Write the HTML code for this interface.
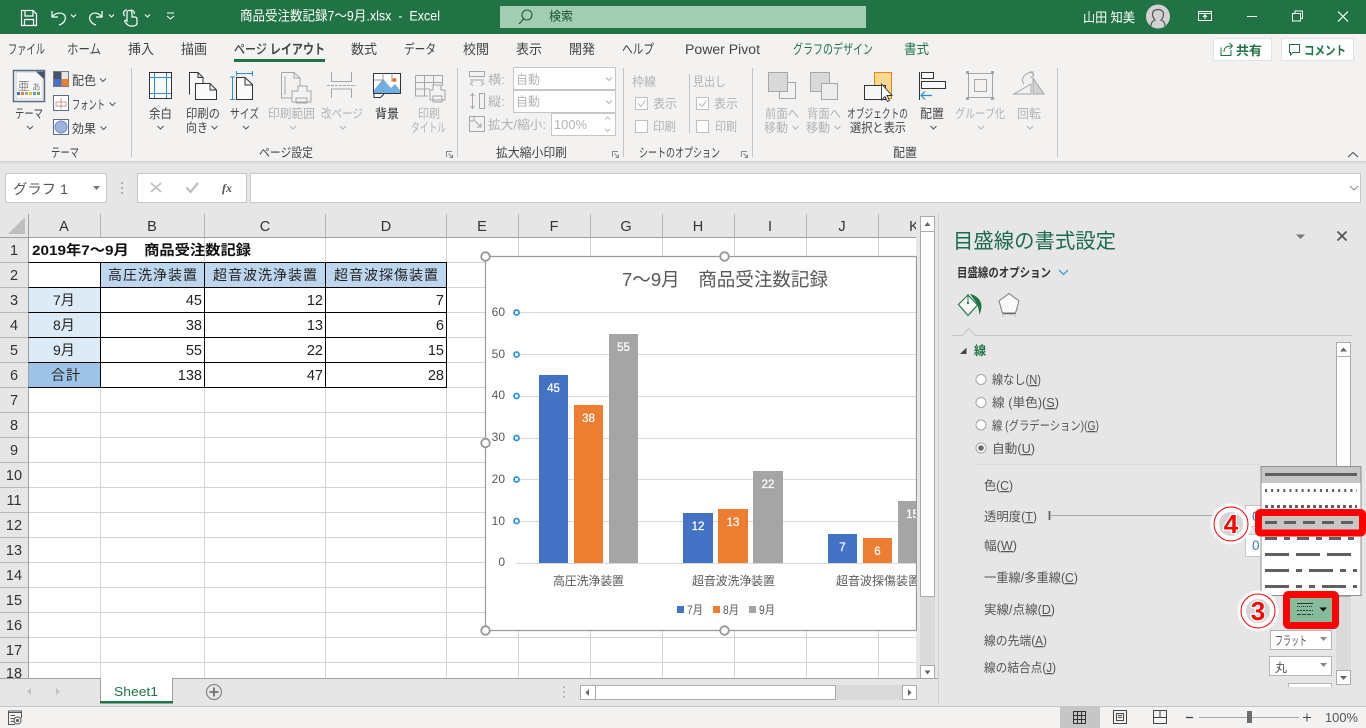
<!DOCTYPE html>
<html lang="ja"><head><meta charset="utf-8"><title>商品受注数記録7～9月.xlsx - Excel</title>
<style>
html,body{margin:0;padding:0;background:#e6e6e6;width:1366px;height:728px;overflow:hidden}
svg{display:block}
text{font-family:"Liberation Sans","Noto Sans CJK JP",sans-serif;font-size:12.5px;fill:#444}
.w{fill:#fff}.d{fill:#b3b3b3}.g{fill:#217346}.tab{font-size:13.5px}
.c{font-size:14px;fill:#222}.n{font-size:14.5px;fill:#222;text-anchor:end}
.h{font-size:14.5px;fill:#333;text-anchor:middle}
.p{font-size:12.5px;fill:#555}
.cl{font-size:11.5px;fill:#fff;text-anchor:middle;stroke:#fff;stroke-width:.25px}
.ax{font-size:12px;fill:#595959}
.u{text-decoration:underline}
.gl{stroke:#d4d4d4;stroke-width:1}
.blk{stroke:#000;stroke-width:1}
.ic{fill:none;stroke:#444;stroke-width:1}
.di{fill:none;stroke:#a6a6a6;stroke-width:1}
.dash{stroke:#5f5f5f;stroke-width:3}
</style></head><body>
<svg width="1366" height="728" viewBox="0 0 1366 728" xmlns="http://www.w3.org/2000/svg">
<defs>
<path id="ch" d="M-3 -1.5L0 1.5L3 -1.5" fill="none" stroke="#555" stroke-width="1"/>
<path id="chd" d="M-3 -1.5L0 1.5L3 -1.5" fill="none" stroke="#b3b3b3" stroke-width="1"/>
<path id="lau" d="M.5 6V.5H6M2.5 2.5L6.500 6.500M6.500 3.500V6.500H3.500" fill="none" stroke="#8a8a8a" stroke-width="1"/>
<clipPath id="cc"><rect x="480" y="250" width="436.500" height="390"/></clipPath>
<clipPath id="gc"><rect x="0" y="238" width="916" height="440"/></clipPath>
</defs>
<rect width="1366" height="728" fill="#e6e6e6"/>

<!-- title bar -->
<rect width="1366" height="34" fill="#217346"/>
<g fill="none" stroke="#fff" stroke-width="1.200">
<path d="M21.500 10.500H33L36.500 14V25.500H21.500ZM25 10.500V16H33V10.500M24.500 25.500V19.500H33.500V25.500"/>
<path d="M52 11V17H58M52.500 16.500C56 12 63 12 65 16C66.500 20 63 24 59 25"/>
<path d="M102 11V17H96M101.500 16.500C98 12 92 12 90 16C88.500 20 92 24 96 25"/>
<path d="M127 21V13C127 9.500 132 9.500 132 13V17H135C137 17 137 19 137 20V23C137 25 135 26 133 26H130C128 26 127 24 125 22C124 20 126 20 127 21ZM124.500 16C122 12 125 10 127 10M134 14C135 12 133 10 131 10"/>
</g>
<path d="M71 14.500L73.500 17L76 14.500M109 14.500L111.500 17L114 14.500M145 14.500L147.500 17L150 14.500" fill="none" stroke="#fff"/>
<path d="M167 13H174M167 16L170.500 19L174 16" fill="none" stroke="#fff"/>
<text class="w" x="240" y="20.500" textLength="200" lengthAdjust="spacingAndGlyphs" style="font-size:13.500px;white-space:pre">商品受注数記録7～9月.xlsx  -  Excel</text>
<rect x="500" y="6" width="366" height="22" fill="#a0cdb3"/>
<path d="M532 15a5 5 0 1 1-10 0a5 5 0 1 1 10 0M523.500 19L519 24" fill="none" stroke="#1d5c38" stroke-width="1.100"/>
<text x="549" y="20.500" textLength="24" lengthAdjust="spacingAndGlyphs" style="fill:#1c5535">検索</text>
<text class="w" x="1083" y="22" textLength="52" lengthAdjust="spacingAndGlyphs" style="font-size:13px">山田 知美</text>
<circle cx="1158" cy="16.500" r="12" fill="#d2d2d2"/>
<path d="M1151 26C1151 22 1153 21 1155 20C1153 18 1152.500 16 1152.500 14C1152.500 8 1163.500 8 1163.500 14C1163.500 16 1163 18 1161 20C1163 21 1165 22 1165 26" fill="none" stroke="#555" stroke-width="1.200"/>
<g fill="none" stroke="#fff" stroke-width="1">
<path d="M1198.500 11.500H1211.500V20.500H1198.500ZM1198.500 13.500H1211.500M1205 19V15M1203 17L1205 15L1207 17"/>
<path d="M1247 16.500H1257"/>
<path d="M1292.500 13.500H1300.500V21H1292.500ZM1295 13.500V11H1302.500V18.500H1300.500"/>
<path d="M1338 11.500L1348 21.500M1348 11.500L1338 21.500" stroke-width="1.200"/>
</g>

<!-- ribbon -->
<rect y="34" width="1366" height="127" fill="#f3f2f1"/>
<rect y="161" width="1366" height="1" fill="#d0d0d0"/><rect y="162" width="1366" height="1" fill="#dcdcdc"/><rect y="163" width="1366" height="1" fill="#e2e2e2"/>
<text class="tab" x="8" y="54" textLength="37" lengthAdjust="spacingAndGlyphs">ファイル</text>
<text class="tab" x="67" y="54" textLength="34" lengthAdjust="spacingAndGlyphs">ホーム</text>
<text class="tab" x="128" y="54" textLength="26" lengthAdjust="spacingAndGlyphs">挿入</text>
<text class="tab" x="181" y="54" textLength="26" lengthAdjust="spacingAndGlyphs">描画</text>
<text class="tab" x="234" y="54" textLength="91" lengthAdjust="spacingAndGlyphs" style="font-weight:500">ページ <tspan font-weight="bold">レイアウト</tspan></text>
<text class="tab" x="351" y="54" textLength="26" lengthAdjust="spacingAndGlyphs">数式</text>
<text class="tab" x="404" y="54" textLength="32" lengthAdjust="spacingAndGlyphs">データ</text>
<text class="tab" x="463" y="54" textLength="26" lengthAdjust="spacingAndGlyphs">校閲</text>
<text class="tab" x="516" y="54" textLength="26" lengthAdjust="spacingAndGlyphs">表示</text>
<text class="tab" x="569" y="54" textLength="26" lengthAdjust="spacingAndGlyphs">開発</text>
<text class="tab" x="622" y="54" textLength="32" lengthAdjust="spacingAndGlyphs">ヘルプ</text>
<text class="tab" x="685" y="54" textLength="75" lengthAdjust="spacingAndGlyphs">Power Pivot</text>
<text class="tab g" x="793" y="54" textLength="80" lengthAdjust="spacingAndGlyphs">グラフのデザイン</text>
<text class="tab g" x="904" y="54" textLength="25" lengthAdjust="spacingAndGlyphs">書式</text>
<rect x="234" y="59" width="91" height="3" fill="#217346"/>
<rect x="1213.500" y="38.500" width="58" height="22" fill="#fff" stroke="#e2e2e2"/>
<rect x="1281.500" y="38.500" width="72" height="22" fill="#fff" stroke="#e2e2e2"/>
<path d="M1221 47.500V55.500H1231V50M1224 52C1224 47 1227 46 1232 46M1229.500 43L1232.500 46L1229.500 49" fill="none" stroke="#217346"/>
<text class="g" x="1236" y="55" textLength="26" lengthAdjust="spacingAndGlyphs" font-weight="bold">共有</text>
<path d="M1289.500 44.500H1299.500V52.500H1293L1290.500 55V52.500H1289.500Z" fill="none" stroke="#217346"/>
<text class="g" x="1304" y="55" textLength="42" lengthAdjust="spacingAndGlyphs" font-weight="bold">コメント</text>

<!-- separators -->
<g stroke="#c4c4c4">
<path d="M131.500 68V157M457.500 68V157M623.500 68V157M752.500 68V157M1057.500 68V157"/>
<path d="M689.500 74V133"/>
</g>

<!-- theme group -->
<rect x="13.500" y="70.500" width="31" height="31" fill="#fff" stroke="#5b6b83" stroke-width="1.500"/>
<path d="M16 72H37L43 78V99H16Z" fill="#f7f7f7" stroke="#ccc"/>
<path d="M36 71.500H44V79Z" fill="#44546a"/>
<text x="18" y="90" style="font-size:11.500px;fill:#8a8a8a">亜</text><text x="32" y="90" style="font-size:8.500px;fill:#8a8a8a">あ</text>
<g><rect x="17" y="92" width="3" height="3" fill="#4472c4"/><rect x="21" y="92" width="3" height="3" fill="#ed7d31"/><rect x="25" y="92" width="3" height="3" fill="#a5a5a5"/><rect x="29" y="92" width="3" height="3" fill="#ffc000"/><rect x="33" y="92" width="3" height="3" fill="#5b9bd5"/><rect x="37" y="92" width="3" height="3" fill="#70ad47"/></g>
<text x="15" y="118" textLength="28" lengthAdjust="spacingAndGlyphs">テーマ</text>
<use href="#ch" x="30" y="127.500"/>
<rect x="53.500" y="71.500" width="15" height="15" fill="#e7e6e6" stroke="#7a7a7a"/>
<rect x="54" y="72" width="7.500" height="7" fill="#44546a"/><rect x="54" y="79" width="7.500" height="7" fill="#4472c4"/><rect x="61.500" y="79" width="7" height="7" fill="#ed7d31"/>
<text x="72" y="85" textLength="24" lengthAdjust="spacingAndGlyphs">配色</text><use href="#ch" x="103" y="80"/>
<rect x="53.500" y="95.500" width="15" height="15" fill="#fff" stroke="#5b6b83"/>
<path d="M56 102H66V106H56ZM61 98V109" fill="none" stroke="#c98" stroke-width="1"/>
<text x="72" y="109" textLength="33" lengthAdjust="spacingAndGlyphs">フォント</text><use href="#ch" x="112.500" y="104"/>
<rect x="53.500" y="119.500" width="15" height="15" fill="#fff" stroke="#5b6b83"/>
<circle cx="61" cy="127" r="6" fill="#9fb2de" stroke="#6f8ac8"/>
<text x="72" y="133" textLength="24" lengthAdjust="spacingAndGlyphs">効果</text><use href="#ch" x="103.500" y="128"/>
<text x="51" y="157" textLength="28" lengthAdjust="spacingAndGlyphs">テーマ</text>

<!-- page setup -->
<rect x="149.500" y="72.500" width="22" height="26" fill="#fafafa" stroke="#333"/>
<path d="M154.500 73V98M166.500 73V98M150 77.500H171M150 93.500H171" stroke="#2a8ad4" fill="none"/>
<text x="149" y="118" textLength="23" lengthAdjust="spacingAndGlyphs">余白</text><use href="#ch" x="160.500" y="127.500"/>
<path d="M189.500 94.500V72.500H198L203 77.500V83M198 72.500V77.500H203" fill="#fafafa" stroke="#333"/>
<path d="M195.500 83.500H210L216.500 90V99.500H195.500ZM210 83.500V90H216.500" fill="#fafafa" stroke="#333"/>
<text x="186" y="118" textLength="34" lengthAdjust="spacingAndGlyphs">印刷の</text>
<text x="186" y="132" textLength="22" lengthAdjust="spacingAndGlyphs">向き</text><use href="#ch" x="214.500" y="127.500"/>
<path d="M236.500 77.500H245L252.500 84.500V99.500H236.500ZM245 77.500V85H252.500" fill="#fafafa" stroke="#333"/>
<path d="M236 73.500H253M236.500 71V76M252.500 71V76M232.500 77V99.500M230 77H235M230 99.500H235" stroke="#2a8ad4" fill="none"/>
<text x="230" y="118" textLength="29" lengthAdjust="spacingAndGlyphs">サイズ</text><use href="#ch" x="246" y="127.500"/>
<path d="M281.500 72.500H294L300 78V88M281.500 72.500V98H292M285 76V95M294 72.500V78H300" class="di"/>
<path d="M298 86H307V91H311V102H292V91H298ZM296 98H307V103H296Z" fill="#f3f2f1" stroke="#a6a6a6"/>
<text class="d" x="268" y="118" textLength="47" lengthAdjust="spacingAndGlyphs">印刷範囲</text><use href="#chd" x="293" y="127.500"/>
<path d="M331.500 72V81.500H351.500V72M331.500 98V89H351.500V98" class="di"/><path d="M327 85.500H356" stroke="#a6a6a6" stroke-dasharray="3 1"/>
<text class="d" x="321" y="118" textLength="42" lengthAdjust="spacingAndGlyphs">改ページ</text><use href="#chd" x="343" y="127.500"/>
<rect x="373.500" y="73.500" width="27" height="20" fill="#fff" stroke="#333"/>
<path d="M374 90L383 79L391 88L395 84L400 90V93H374Z" fill="#6fb0e0"/>
<circle cx="394.500" cy="80" r="2" fill="#e8761e"/>
<path d="M383 73.500V85M392 73.500V82M374 80H383" stroke="#999"/>
<path d="M374 94V97.500H380.500L384 94" fill="#fff" stroke="#333"/>
<text x="375" y="118" textLength="24" lengthAdjust="spacingAndGlyphs" font-weight="500">背景</text>
<path d="M415.500 75.500H442.500V86M415.500 75.500V96H428M415.500 82.500H442.500M415.500 89H430M424.500 75.500V96M433.500 75.500V85" class="di"/>
<path d="M433 85H441V90H445V100H430V90H433ZM433 96H442V102H433Z" fill="#f3f2f1" stroke="#a6a6a6"/>
<text class="d" x="418" y="118" textLength="22" lengthAdjust="spacingAndGlyphs">印刷</text>
<text class="d" x="411" y="132" textLength="35" lengthAdjust="spacingAndGlyphs">タイトル</text>
<text x="259" y="157" textLength="54" lengthAdjust="spacingAndGlyphs">ページ設定</text>
<use href="#lau" x="446" y="151"/>

<!-- scale -->
<g class="di"><path d="M469.500 71.500H484.500V76.500H469.500ZM470 80H484"/><path d="M470 81.500L473 79.500M470 81.500L473 83.500M484 81.500L481 79.500M484 81.500L481 83.500" transform="translate(0,2)"/>
<path d="M479.500 93.500H484.500V108.500H479.500ZM472.500 94V108M470.500 96L472.500 93.500L474.500 96M470.500 106L472.500 108.500L474.500 106"/>
<path d="M469.500 116.500H484.500V131.500H469.500ZM469.500 121H474V116.500M475 121L481 127M481 123V127H477"/></g>
<text class="d" x="488" y="84" textLength="17" lengthAdjust="spacingAndGlyphs">横:</text>
<text class="d" x="488" y="106" textLength="17" lengthAdjust="spacingAndGlyphs">縦:</text>
<text class="d" x="488" y="129" textLength="58" lengthAdjust="spacingAndGlyphs">拡大/縮小:</text>
<rect x="513.500" y="67.500" width="102" height="22" fill="#fff" stroke="#c6c6c6"/>
<rect x="513.500" y="90.500" width="102" height="22" fill="#fff" stroke="#c6c6c6"/>
<rect x="551.500" y="113.500" width="64" height="22" fill="#fff" stroke="#c6c6c6"/>
<text class="d" x="516" y="84" textLength="24" lengthAdjust="spacingAndGlyphs">自動</text><use href="#chd" x="609" y="79"/>
<text class="d" x="516" y="106" textLength="24" lengthAdjust="spacingAndGlyphs">自動</text><use href="#chd" x="609" y="102"/>
<text class="d" x="554" y="129" textLength="33" lengthAdjust="spacingAndGlyphs">100%</text>
<path d="M605 119.500L607.500 117L610 119.500M605 129L607.500 131.500L610 129" fill="none" stroke="#bbb"/>
<text x="496" y="157" textLength="71" lengthAdjust="spacingAndGlyphs">拡大縮小印刷</text>
<use href="#lau" x="612" y="151"/>

<!-- sheet options -->
<text class="d" x="632" y="86" textLength="24" lengthAdjust="spacingAndGlyphs">枠線</text>
<text class="d" x="693" y="86" textLength="33" lengthAdjust="spacingAndGlyphs">見出し</text>
<g fill="#fdfdfd" stroke="#bfbfbf"><rect x="635.500" y="97.500" width="12" height="12"/><rect x="635.500" y="120.500" width="12" height="12"/><rect x="696.500" y="97.500" width="12" height="12"/><rect x="696.500" y="120.500" width="12" height="12"/></g>
<path d="M638 103.500L641 106.500L645.500 100.500M699 103.500L702 106.500L706.500 100.500" fill="none" stroke="#b5b5b5"/>
<text class="d" x="653" y="108" textLength="24" lengthAdjust="spacingAndGlyphs">表示</text>
<text class="d" x="653" y="131" textLength="23" lengthAdjust="spacingAndGlyphs">印刷</text>
<text class="d" x="714" y="108" textLength="24" lengthAdjust="spacingAndGlyphs">表示</text>
<text class="d" x="715" y="131" textLength="22" lengthAdjust="spacingAndGlyphs">印刷</text>
<text x="639" y="157" textLength="81" lengthAdjust="spacingAndGlyphs">シートのオプション</text>
<use href="#lau" x="741" y="151"/>

<!-- arrange -->
<rect x="779.500" y="82.500" width="16" height="16" fill="#f3f2f1" stroke="#a6a6a6"/>
<rect x="768.500" y="72.500" width="19" height="19" fill="#d9d9d9" stroke="#a6a6a6"/>
<rect x="810.500" y="72.500" width="19" height="19" fill="#d9d9d9" stroke="#a6a6a6"/>
<rect x="821.500" y="83.500" width="16" height="16" fill="#ececec" stroke="#a6a6a6"/>
<text class="d" x="765" y="118" textLength="34" lengthAdjust="spacingAndGlyphs">前面へ</text>
<text class="d" x="764" y="132" textLength="24" lengthAdjust="spacingAndGlyphs">移動</text><use href="#chd" x="795.500" y="127.500"/>
<text class="d" x="807" y="118" textLength="34" lengthAdjust="spacingAndGlyphs">背面へ</text>
<text class="d" x="806" y="132" textLength="24" lengthAdjust="spacingAndGlyphs">移動</text><use href="#chd" x="837.500" y="127.500"/>
<rect x="874.500" y="72.500" width="17" height="26" fill="#f9d98f" stroke="#e8861e"/>
<rect x="864.500" y="85.500" width="21" height="14" fill="#f7f7f7" stroke="#333"/>
<path d="M881.500 84V100L885 96.500L887.500 101.500L889.500 100.500L887 95.500H892Z" fill="#fff" stroke="#333" stroke-width=".9"/>
<text x="847" y="118" textLength="61" lengthAdjust="spacingAndGlyphs">オブジェクトの</text>
<text x="850" y="132" textLength="56" lengthAdjust="spacingAndGlyphs">選択と表示</text>
<text x="893" y="157" textLength="24" lengthAdjust="spacingAndGlyphs">配置</text>
<path d="M919.500 72V100" stroke="#333"/><rect x="921.500" y="72.500" width="12" height="6" fill="#fafafa" stroke="#333"/><rect x="921.500" y="81.500" width="24" height="7" fill="#fafafa" stroke="#333"/>
<path d="M921 95.500H932M925 91.500L921 95.500L925 99.500" fill="none" stroke="#2a8ad4" stroke-width="1.200"/>
<text x="920" y="118" textLength="24" lengthAdjust="spacingAndGlyphs">配置</text><use href="#ch" x="933.500" y="127.500"/>
<g class="di"><path d="M968.500 73.500H992.500V97.500H968.500ZM974.500 79.500H986.500V91.500H974.500Z"/></g>
<g fill="#a6a6a6"><rect x="966" y="71" width="3" height="3"/><rect x="991" y="71" width="3" height="3"/><rect x="966" y="97" width="3" height="3"/><rect x="991" y="97" width="3" height="3"/></g>
<text class="d" x="955" y="118" textLength="50" lengthAdjust="spacingAndGlyphs">グループ化</text><use href="#chd" x="981" y="127.500"/>
<path d="M1014 94L1031 84V94ZM1034 72C1024 72 1020 80 1024 84M1030 71L1034 75L1030 78" class="di" stroke-width="1"/>
<path d="M1033 78L1044 94H1033Z" fill="#d2d2d2" stroke="#a6a6a6"/>
<text class="d" x="1017" y="118" textLength="24" lengthAdjust="spacingAndGlyphs">回転</text><use href="#chd" x="1030" y="127.500"/>
<path d="M1348 157L1353 152.500L1358 157" fill="none" stroke="#444"/>

<!-- formula bar -->
<rect x="5.500" y="173.500" width="101" height="29" fill="#fff" stroke="#c6c6c6"/>
<text x="13" y="194" textLength="55" lengthAdjust="spacingAndGlyphs" style="font-size:14px;fill:#555">グラフ 1</text>
<path d="M93 186H100L96.500 190Z" fill="#777"/>
<g fill="#b0b0b0"><rect x="121" y="182" width="2" height="2"/><rect x="121" y="187" width="2" height="2"/><rect x="121" y="192" width="2" height="2"/></g>
<rect x="137.500" y="173.500" width="109" height="29" fill="#fff" stroke="#c6c6c6"/>
<path d="M151 183L161 192M161 183L151 192" stroke="#bdbdbd" stroke-width="1.600" fill="none"/>
<path d="M186.500 187.500L190.500 192L198 183" stroke="#bdbdbd" stroke-width="2.200" fill="none"/>
<text x="222" y="192" style="font-family:'Liberation Serif',serif;font-style:italic;font-weight:bold;font-size:12px;fill:#555">fx</text>
<rect x="250.500" y="173.500" width="1110" height="29" fill="#fff" stroke="#c6c6c6"/>
<path d="M1350 186L1354 190L1358 186" fill="none" stroke="#888"/>

<!-- sheet -->
<rect x="0" y="214" width="938" height="24" fill="#e6e6e6"/>
<rect x="0" y="238" width="29" height="440" fill="#e6e6e6"/>
<rect x="29" y="238" width="887" height="440" fill="#fff"/>
<path d="M8 234L25 217V234Z" fill="#bfbfbf"/>
<g stroke="#b5b5b5"><path d="M28.500 214V237M100.500 214V237M204.500 214V237M325.500 214V237M446.500 214V237M518.500 214V237M590.500 214V237M662.500 214V237M734.500 214V237M806.500 214V237M878.500 214V237"/></g>
<path d="M0 237.500H916M28.500 214V678" stroke="#9f9f9f"/>
<g clip-path="url(#gc)">
<g class="gl">
<path d="M100.500 238V678M204.500 238V678M325.500 238V678M446.500 238V678M518.500 238V678M590.500 238V678M662.500 238V678M734.500 238V678M806.500 238V678M878.500 238V678"/>
<path d="M29 262.500H916M29 287.500H916M29 312.500H916M29 337.500H916M29 362.500H916M29 387.500H916M29 412.500H916M29 437.500H916M29 462.500H916M29 487.500H916M29 512.500H916M29 537.500H916M29 562.500H916M29 587.500H916M29 612.500H916M29 637.500H916M29 662.500H916"/>
</g>
<g stroke="#b9b9b9"><path d="M0 262.500H28M0 287.500H28M0 312.500H28M0 337.500H28M0 362.500H28M0 387.500H28M0 412.500H28M0 437.500H28M0 462.500H28M0 487.500H28M0 512.500H28M0 537.500H28M0 562.500H28M0 587.500H28M0 612.500H28M0 637.500H28M0 662.500H28"/></g>
</g>
<rect x="29" y="238" width="175" height="24" fill="#fff"/><rect x="204" y="238" width="121" height="24" fill="#fff"/>
<path d="M204.500 238V262M325.500 238V262M446.500 238V262" class="gl"/>
<rect x="100" y="262" width="346" height="25" fill="#bdd7ee"/>
<rect x="29" y="287" width="71" height="75" fill="#ddebf7"/>
<rect x="29" y="362" width="71" height="25" fill="#9dc3e6"/>
<g class="blk"><path d="M28.500 262.500H447M28.500 287.500H447M28.500 312.500H447M28.500 337.500H447M28.500 362.500H447M28.500 387.500H447M100.500 262V388M204.500 262V388M325.500 262V388M446.500 262V388"/></g>

<text class="h" x="64" y="231">A</text><text class="h" x="152" y="231">B</text><text class="h" x="265" y="231">C</text><text class="h" x="386" y="231">D</text><text class="h" x="482" y="231">E</text><text class="h" x="554" y="231">F</text><text class="h" x="626" y="231">G</text><text class="h" x="698" y="231">H</text><text class="h" x="770" y="231">I</text><text class="h" x="842" y="231">J</text><text class="h" x="914" y="231">K</text>
<rect x="916" y="214" width="22" height="24" fill="#e6e6e6"/>
<text class="h" x="14" y="255">1</text><text class="h" x="14" y="280">2</text><text class="h" x="14" y="305">3</text><text class="h" x="14" y="330">4</text><text class="h" x="14" y="355">5</text><text class="h" x="14" y="380">6</text><text class="h" x="14" y="405">7</text><text class="h" x="14" y="430">8</text><text class="h" x="14" y="455">9</text><text class="h" x="14" y="480">10</text><text class="h" x="14" y="505">11</text><text class="h" x="14" y="530">12</text><text class="h" x="14" y="555">13</text><text class="h" x="14" y="580">14</text><text class="h" x="14" y="605">15</text><text class="h" x="14" y="630">16</text><text class="h" x="14" y="655">17</text>
<text class="h" x="14" y="678">18</text>

<text class="c" x="32" y="255" textLength="219" lengthAdjust="spacingAndGlyphs" font-weight="bold" style="fill:#111">2019年7～9月　商品受注数記録</text>
<text class="c" x="108" y="280" textLength="89" lengthAdjust="spacing">高圧洗浄装置</text>
<text class="c" x="213" y="280" textLength="104" lengthAdjust="spacing">超音波洗浄装置</text>
<text class="c" x="334" y="280" textLength="104" lengthAdjust="spacing">超音波探傷装置</text>
<text class="c" x="53" y="305">7月</text><text class="c" x="53" y="330">8月</text><text class="c" x="53" y="355">9月</text>
<text class="c" x="51" y="380" textLength="29" lengthAdjust="spacing">合計</text>
<text class="n" x="202" y="305">45</text><text class="n" x="323" y="305">12</text><text class="n" x="444" y="305">7</text>
<text class="n" x="202" y="330">38</text><text class="n" x="323" y="330">13</text><text class="n" x="444" y="330">6</text>
<text class="n" x="202" y="355">55</text><text class="n" x="323" y="355">22</text><text class="n" x="444" y="355">15</text>
<text class="n" x="202" y="380">138</text><text class="n" x="323" y="380">47</text><text class="n" x="444" y="380">28</text>

<!-- chart -->
<rect x="486" y="257" width="431" height="373" fill="#fff"/>
<g clip-path="url(#cc)">
<path d="M516 312.500H917M516 354.500H917M516 396.500H917M516 438.500H917M516 479.500H917M516 521.500H917M516 563.500H917" stroke="#d9d9d9"/>
<rect x="539" y="375" width="29" height="188" fill="#4472c4"/>
<rect x="574" y="405" width="29" height="158" fill="#ed7d31"/>
<rect x="609" y="334" width="29" height="229" fill="#a5a5a5"/>
<rect x="683" y="513" width="30" height="50" fill="#4472c4"/>
<rect x="718" y="509" width="30" height="54" fill="#ed7d31"/>
<rect x="753" y="471" width="30" height="92" fill="#a5a5a5"/>
<rect x="828" y="534" width="29" height="29" fill="#4472c4"/>
<rect x="863" y="538" width="29" height="25" fill="#ed7d31"/>
<rect x="898" y="501" width="29" height="62" fill="#a5a5a5"/>
<text class="cl" x="553.500" y="392">45</text><text class="cl" x="588.500" y="422">38</text><text class="cl" x="623.500" y="351">55</text>
<text class="cl" x="698" y="530">12</text><text class="cl" x="733" y="526">13</text><text class="cl" x="768" y="488">22</text>
<text class="cl" x="842.500" y="551">7</text><text class="cl" x="877.500" y="555">6</text><text class="cl" x="912.500" y="518">15</text>
<text class="ax" x="553" y="585" textLength="71" lengthAdjust="spacing">高圧洗浄装置</text>
<text class="ax" x="692" y="585" textLength="83" lengthAdjust="spacing">超音波洗浄装置</text>
<text class="ax" x="836" y="585" textLength="84" lengthAdjust="spacing">超音波探傷装置</text>
</g>
<text x="622" y="286" textLength="206" lengthAdjust="spacingAndGlyphs" style="font-size:18.500px;fill:#595959">7～9月　商品受注数記録</text>
<text class="ax" x="505" y="316" text-anchor="end">60</text><text class="ax" x="505" y="358" text-anchor="end">50</text><text class="ax" x="505" y="399" text-anchor="end">40</text><text class="ax" x="505" y="441" text-anchor="end">30</text><text class="ax" x="505" y="483" text-anchor="end">20</text><text class="ax" x="505" y="525" text-anchor="end">10</text><text class="ax" x="505" y="566" text-anchor="end">0</text>
<g fill="#fff" stroke="#2f93e0" stroke-width="1.800"><circle cx="516.500" cy="312.500" r="2.500"/><circle cx="516.500" cy="354.500" r="2.500"/><circle cx="516.500" cy="396" r="2.500"/><circle cx="516.500" cy="438" r="2.500"/><circle cx="516.500" cy="479.500" r="2.500"/><circle cx="516.500" cy="521" r="2.500"/></g>
<rect x="677" y="606" width="7" height="7" fill="#4472c4"/><text class="ax" x="687" y="614" textLength="16" lengthAdjust="spacingAndGlyphs" style="font-size:12px">7月</text>
<rect x="713" y="606" width="7" height="7" fill="#ed7d31"/><text class="ax" x="723" y="614" textLength="16" lengthAdjust="spacingAndGlyphs" style="font-size:12px">8月</text>
<rect x="749" y="606" width="7" height="7" fill="#a5a5a5"/><text class="ax" x="759" y="614" textLength="16" lengthAdjust="spacingAndGlyphs" style="font-size:12px">9月</text>
<path d="M916.500 256.500H485.500V630.500H916.500V256.500" fill="none" stroke="#9a9a9a" stroke-width="1.200"/>
<g fill="#fff" stroke="#979797" stroke-width="1.800"><circle cx="485.500" cy="256.500" r="4.300"/><circle cx="724.500" cy="256.500" r="4.300"/><circle cx="485.500" cy="443" r="4.300"/><circle cx="485.500" cy="630.500" r="4.300"/><circle cx="724.500" cy="630.500" r="4.300"/></g>

<!-- vertical scrollbar -->
<rect x="917" y="214" width="21" height="464" fill="#e6e6e6"/>
<rect x="920" y="232" width="15" height="433" fill="#dadada"/>
<rect x="920.500" y="216.500" width="14" height="15" fill="#fff" stroke="#ababab"/>
<rect x="920.500" y="231.500" width="14" height="365" fill="#fff" stroke="#ababab"/>
<rect x="920.500" y="665.500" width="14" height="14" fill="#fff" stroke="#ababab"/>
<path d="M924.500 226L927.500 222L930.500 226ZM924.500 670.500H930.500L927.500 674.500Z" fill="#666"/>

<!-- tabs bar -->
<rect x="0" y="678" width="938" height="28" fill="#e6e6e6"/>
<path d="M0 678.500H100M172 678.500H938" stroke="#9f9f9f"/>
<rect x="100" y="678" width="73" height="25" fill="#fff"/>
<path d="M100.500 678V703M172.500 678V703" stroke="#9f9f9f"/>
<rect x="100" y="701" width="73" height="2.500" fill="#217346"/>
<text x="114" y="696" textLength="44" lengthAdjust="spacingAndGlyphs" style="font-size:13px;fill:#217346">Sheet1</text>
<path d="M31 688V695L27 691.500ZM56 688V695L60 691.500Z" fill="#c4c4c4"/>
<circle cx="214" cy="692" r="7.500" fill="none" stroke="#8a8a8a" stroke-width="1.300"/>
<path d="M209.500 692H218.500M214 687.500V696.500" stroke="#6f6f6f" stroke-width="1.800"/>
<g fill="#bdbdbd"><rect x="563" y="686" width="2" height="2"/><rect x="563" y="691" width="2" height="2"/><rect x="563" y="696" width="2" height="2"/></g>
<rect x="580" y="685" width="337" height="15" fill="#dadada"/>
<rect x="580.500" y="685.500" width="15" height="14" fill="#fff" stroke="#ababab"/>
<rect x="595.500" y="685.500" width="240" height="14" fill="#fff" stroke="#ababab"/>
<rect x="902.500" y="685.500" width="14" height="14" fill="#fff" stroke="#ababab"/>
<path d="M589 689V696L585.500 692.500ZM908 689V696L911.500 692.500Z" fill="#666"/>
<path d="M938.500 214V704" stroke="#d0d0d0"/>

<!-- pane -->
<rect x="939" y="214" width="427" height="492" fill="#e6e6e6"/>
<text x="953" y="248" textLength="163" lengthAdjust="spacingAndGlyphs" style="font-size:20.500px;fill:#1b6a50">目盛線の書式設定</text>
<path d="M1296 234.500H1305L1300.500 239Z" fill="#777"/>
<path d="M1337.500 231.500L1346.500 240.500M1346.500 231.500L1337.500 240.500" stroke="#555" stroke-width="1.800"/>
<text x="957" y="277" textLength="94" lengthAdjust="spacingAndGlyphs" font-weight="bold" style="fill:#333">目盛線のオプション</text>
<path d="M1059 270L1063.500 274.500L1068 270" fill="none" stroke="#2a8ad4" stroke-width="1.100"/>
<path d="M958.500 304.500L968 295L977.500 305L968 315.500Z" fill="#fafafa" stroke="#217346" stroke-width="1.100"/>
<path d="M968 294V302" stroke="#217346"/><circle cx="968" cy="303" r="1.100" fill="#217346"/>
<path d="M970 294C976 295 981.500 300 981.500 306C981.500 309 980.500 312 979.500 315C979 311 978.500 307 976.500 303Z" fill="#217346"/>
<path d="M1009 293.500L1019 301L1015.500 313H1002.500L999 301Z" fill="#fafafa" stroke="#7a7a7a"/>
<path d="M1002.500 313.500H1015.500" stroke="#6a6a6a" stroke-width="1.500"/>
<path d="M1002.500 315V317M1015.500 315V317" stroke="#c4c4c4"/>
<path d="M952 335.500H962.500L969 328.500L975.500 335.500H1352" fill="none" stroke="#c6c6c6"/>
<path d="M960 354H966.500V347.500Z" fill="#444"/>
<text class="g" x="974" y="355" textLength="12" lengthAdjust="spacingAndGlyphs" font-weight="bold">線</text>
<g fill="#fff" stroke="#a6a6a6"><circle cx="981" cy="379.500" r="5"/><circle cx="981" cy="402.500" r="5"/><circle cx="981" cy="425" r="5"/><circle cx="981" cy="448" r="5"/></g>
<circle cx="981" cy="448" r="2.800" fill="#666"/>
<text class="p" x="992" y="384" textLength="49" lengthAdjust="spacingAndGlyphs">線なし(<tspan class="u">N</tspan>)</text>
<text class="p" x="992" y="407" textLength="67" lengthAdjust="spacingAndGlyphs">線 (単色)(<tspan class="u">S</tspan>)</text>
<text class="p" x="992" y="430" textLength="107" lengthAdjust="spacingAndGlyphs">線 (グラデーション)(<tspan class="u">G</tspan>)</text>
<text class="p" x="992" y="453" textLength="43" lengthAdjust="spacingAndGlyphs">自動(<tspan class="u">U</tspan>)</text>
<path d="M974 464.500H1262" stroke="#dcdcdc"/>
<rect x="1336" y="357" width="15" height="314" fill="#dadada"/>
<rect x="1336.500" y="342.500" width="14" height="14" fill="#fff" stroke="#ababab"/>
<rect x="1336.500" y="356.500" width="14" height="240" fill="#fff" stroke="#ababab"/>
<rect x="1336.500" y="670.500" width="14" height="14" fill="#fff" stroke="#ababab"/>
<path d="M1340 351.500L1343.500 347.500L1347 351.500ZM1340 676H1347L1343.500 680Z" fill="#666"/>

<text class="p" x="984" y="490" textLength="29" lengthAdjust="spacingAndGlyphs">色(<tspan class="u">C</tspan>)</text>
<text class="p" x="984" y="521" textLength="53" lengthAdjust="spacingAndGlyphs">透明度(<tspan class="u">T</tspan>)</text>
<path d="M1049.500 511V520" stroke="#666" stroke-width="1.800"/><path d="M1050 515.500H1246" stroke="#a8a8a8"/>
<rect x="1245.500" y="505.500" width="20" height="21" fill="#fff" stroke="#c6c6c6"/>
<text x="1252" y="521" style="fill:#3b79b8;font-size:13.500px">0</text>
<text class="p" x="984" y="550" textLength="33" lengthAdjust="spacingAndGlyphs">幅(<tspan class="u">W</tspan>)</text>
<rect x="1245.500" y="534.500" width="20" height="22" fill="#fff" stroke="#c6c6c6"/>
<text x="1252" y="550" style="fill:#3b79b8;font-size:13.500px">0</text>
<text class="p" x="984" y="582" textLength="94" lengthAdjust="spacingAndGlyphs">一重線/多重線(<tspan class="u">C</tspan>)</text>
<text class="p" x="984" y="614" textLength="71" lengthAdjust="spacingAndGlyphs">実線/点線(<tspan class="u">D</tspan>)</text>
<text class="p" x="984" y="645" textLength="63" lengthAdjust="spacingAndGlyphs">線の先端(<tspan class="u">A</tspan>)</text>
<text class="p" x="984" y="672" textLength="72" lengthAdjust="spacingAndGlyphs">線の結合点(<tspan class="u">J</tspan>)</text>
<rect x="1270.500" y="630.500" width="61" height="19" fill="#fff" stroke="#b5b5b5"/>
<text class="p" x="1275" y="645" textLength="32" lengthAdjust="spacingAndGlyphs">フラット</text>
<path d="M1320 637H1327L1323.500 641Z" fill="#888"/>
<rect x="1269.500" y="656.500" width="62" height="19" fill="#fff" stroke="#b5b5b5"/>
<text class="p" x="1275" y="672" textLength="12" lengthAdjust="spacingAndGlyphs">丸</text>
<path d="M1320 663H1327L1323.500 667Z" fill="#888"/>
<rect x="1288" y="683" width="44" height="4" fill="#fff"/>
<path d="M1288.500 687V683.500H1331.500V687" fill="none" stroke="#b5b5b5"/>

<!-- dropdown -->
<rect x="1261" y="466.500" width="100" height="129" fill="#fff" stroke="#8f8f8f"/>
<rect x="1261.500" y="467" width="99" height="16" fill="#c6c6c6"/>
<path d="M1265 474.500H1357" class="dash"/>
<path d="M1265 490.500H1357" class="dash" stroke-dasharray="2 4.100"/>
<path d="M1265 506.500H1357" class="dash" stroke-dasharray="3 3"/>
<rect x="1262" y="516" width="97" height="14" fill="#c6c6c6"/>
<path d="M1265 522.500H1357" class="dash" stroke-dasharray="12 7"/>
<path d="M1265 538.500H1357" class="dash" stroke-dasharray="12 7 6 7"/>
<path d="M1265 554.500H1357" class="dash" stroke-dasharray="24 7"/>
<path d="M1265 570.500H1357" class="dash" stroke-dasharray="24 7 6 7"/>
<path d="M1265 586.500H1357" class="dash" stroke-dasharray="24 7 6 7 6 7"/>

<rect x="1258.500" y="512.500" width="104" height="20.500" fill="none" stroke="#f00" stroke-width="7" rx="2"/>
<rect x="1286.500" y="594.500" width="49" height="31" fill="#86bc9c" stroke="#f00" stroke-width="7" rx="2"/>
<path d="M1297 603.500H1313" stroke="#333"/><path d="M1297 606.500H1313" stroke="#333" stroke-dasharray="1 1"/><path d="M1297 610.500H1313" stroke="#333" stroke-dasharray="2 1"/><path d="M1297 614.500H1313" stroke="#333" stroke-dasharray="4 1"/>
<path d="M1319.500 607.500H1327L1323.200 611.500Z" fill="#000"/>

<!-- callouts -->
<circle cx="1231" cy="524" r="20.500" fill="#fff"/><circle cx="1231" cy="524" r="17" fill="#fff" stroke="#f00" stroke-width="1"/>
<circle cx="1231" cy="524" r="12" fill="#d4d4d4"/>
<text x="1231" y="533" text-anchor="middle" style="font-size:26px;font-weight:bold;fill:#f00;stroke:#fff;stroke-width:2.500px;paint-order:stroke">4</text>
<circle cx="1258" cy="611" r="20.500" fill="#fff"/><circle cx="1258" cy="611" r="17" fill="#fff" stroke="#f00" stroke-width="1"/>
<circle cx="1258" cy="611" r="12" fill="#d4d4d4"/>
<text x="1258" y="620" text-anchor="middle" style="font-size:26px;font-weight:bold;fill:#f00;stroke:#fff;stroke-width:2.500px;paint-order:stroke">3</text>

<!-- status bar -->
<rect y="706" width="1366" height="22" fill="#f3f2f1"/>
<path d="M0 706.500H1366" stroke="#c6c6c6"/>
<path d="M8.500 712.500V711H21.500V718M8.500 712.500H21.500M8.500 712.500V724.500H15M10.500 715.500H15M10.500 718.500H14M10.500 721.500H14" fill="none" stroke="#555"/>
<circle cx="17.500" cy="720.500" r="3.500" fill="#f3f2f1" stroke="#555"/><circle cx="17.500" cy="720.500" r="1.500" fill="#555"/>
<rect x="1060" y="707" width="40" height="21" fill="#c6c6c6"/>
<path d="M1073.500 711.500H1085.500V723.500H1073.500ZM1077.500 711.500V723.500M1081.500 711.500V723.500M1073.500 715.500H1085.500M1073.500 719.500H1085.500" fill="none" stroke="#333"/>
<path d="M1113.500 710.500H1126.500V723.500H1113.500ZM1116.500 713.500H1123.500V720.500H1116.500ZM1118 715.500H1122M1118 717.500H1122" fill="none" stroke="#444"/>
<path d="M1153.500 710.500H1166.500V723.500H1153.500ZM1153.500 717.500H1166.500M1160 710.500V717.500" fill="none" stroke="#444"/>
<path d="M1186 717.500H1193" stroke="#444" stroke-width="1.300"/>
<path d="M1199 717.500H1299" stroke="#a8a8a8"/>
<rect x="1247" y="711" width="5" height="12" fill="#6e6e6e"/>
<path d="M1303 717.500H1311M1307 713.500V721.500" stroke="#444"/>
<text x="1325" y="722" textLength="33" lengthAdjust="spacingAndGlyphs" style="fill:#555">100%</text>
</svg>
</body></html>
